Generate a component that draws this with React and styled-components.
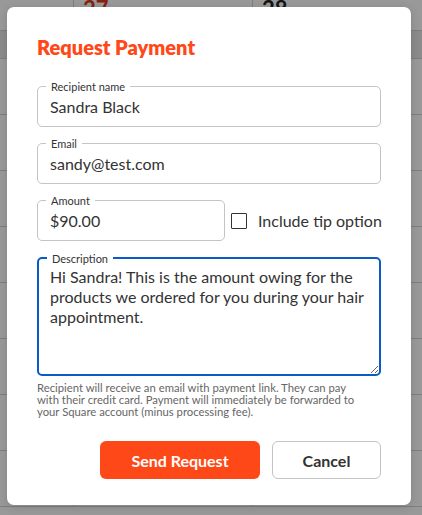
import React from "react";
import styled, { createGlobalStyle } from "styled-components";

const GlobalStyle = createGlobalStyle`
  html, body {
    margin: 0;
    padding: 0;
    background: #fff;
    font-family: Lato, "Open Sans", Arial, sans-serif;
    color: #333;
  }
  * { box-sizing: border-box; }
`;

const Page = styled.div`
  position: relative;
  width: 422px;
  height: 515px;
  overflow: hidden;
`;

const Calendar = styled.div`
  display: flex;
  flex-direction: column;
  width: 100%;
  height: 100%;
  background: #fff;
`;

const DayHeader = styled.div`
  display: grid;
  grid-template-columns: 73px 179px 179px;
  height: 31px;
  border-bottom: 1px solid #d2d2d2;
`;

const DayCell = styled.div`
  border-left: ${(p) => (p.first ? "none" : "1px solid #d2d2d2")};
  padding-left: 9px;
  font-size: 22px;
  font-weight: 700;
  line-height: 18px;
  color: ${(p) => p.color || "#222"};
`;

const AllDayRow = styled.div`
  display: grid;
  grid-template-columns: 73px 179px 179px;
  height: 28px;
  background: #e8e8e8;
  border-bottom: 1px solid #d2d2d2;
`;

const HourRow = styled.div`
  display: grid;
  grid-template-columns: 73px 179px 179px;
  height: 56px;
  flex-shrink: 0;
  border-bottom: 1px solid #d2d2d2;
`;

const GridCell = styled.div`
  border-left: ${(p) => (p.first ? "none" : "1px solid #d2d2d2")};
`;

const Overlay = styled.div`
  position: absolute;
  inset: 0;
  background: rgba(0, 0, 0, 0.4);
  padding: 7px 11px 10px 7px;
`;

const Dialog = styled.div`
  width: 404px;
  height: 498px;
  background: #fff;
  border-radius: 7px;
  box-shadow: 0 2px 10px rgba(0, 0, 0, 0.15);
  padding: 29px 30px 26px 30px;
  display: flex;
  flex-direction: column;
`;

const Title = styled.h2`
  margin: 0 0 28px 0;
  font-size: 20px;
  line-height: 22px;
  font-weight: 800;
  color: #ff4817;
`;

const Form = styled.div`
  display: flex;
  flex-direction: column;
  gap: 16px;
`;

const Row = styled.div`
  display: flex;
  align-items: center;
  gap: 6px;
`;

const Field = styled.div`
  position: relative;
  width: ${(p) => p.width || "100%"};
  height: ${(p) => p.height || "41px"};
  flex-shrink: 0;
  border: ${(p) => (p.focused ? "2px solid #0a5bc8" : "1px solid #c4c4c4")};
  border-radius: 5px;
  display: flex;
`;

const Label = styled.span`
  position: absolute;
  top: -7px;
  left: 8px;
  padding: 0 5px;
  background: #fff;
  font-size: 11px;
  line-height: 13px;
  color: #333;
`;

const Input = styled.input`
  border: none;
  outline: none;
  background: transparent;
  width: 100%;
  padding: 0 12px;
  font-family: inherit;
  font-size: 16px;
  color: #333;
`;

const TextArea = styled.textarea`
  border: none;
  outline: none;
  background: transparent;
  width: 100%;
  height: 100%;
  padding: 8px 10px 0 11px;
  font-family: inherit;
  font-size: 16px;
  line-height: 20px;
  color: #333;
  resize: vertical;
`;

const CheckLabel = styled.label`
  display: flex;
  align-items: center;
  gap: 11px;
  white-space: nowrap;
  font-size: 16px;
  color: #333;
`;

const Box = styled.span`
  width: 16px;
  height: 16px;
  flex-shrink: 0;
  border: 1.5px solid #333;
  border-radius: 1px;
  display: inline-block;
`;

const Hint = styled.p`
  margin: 6px 0 0 0;
  font-size: 11.3px;
  line-height: 12px;
  color: #666;
  white-space: nowrap;
`;

const Actions = styled.div`
  margin-top: auto;
  display: flex;
  justify-content: flex-end;
  gap: 12px;
`;

const Button = styled.button`
  height: 38px;
  width: ${(p) => p.width};
  border-radius: 6px;
  font-family: inherit;
  font-size: 16px;
  font-weight: 700;
  cursor: pointer;
  border: ${(p) => (p.primary ? "none" : "1px solid #c4c4c4")};
  background: ${(p) => (p.primary ? "#ff4817" : "#fff")};
  color: ${(p) => (p.primary ? "#fff" : "#333")};
`;

const rows = Array.from({ length: 8 });

export default function App() {
  return (
    <Page>
      <GlobalStyle />
      <Calendar>
        <DayHeader>
          <DayCell first />
          <DayCell color="#e23a1c">27</DayCell>
          <DayCell>28</DayCell>
        </DayHeader>
        <AllDayRow>
          <GridCell first />
          <GridCell />
          <GridCell />
        </AllDayRow>
        {rows.map((_, i) => (
          <HourRow key={i}>
            <GridCell first />
            <GridCell />
            <GridCell />
          </HourRow>
        ))}
      </Calendar>
      <Overlay>
        <Dialog>
          <Title>Request Payment</Title>
          <Form>
            <Field>
              <Label>Recipient name</Label>
              <Input defaultValue="Sandra Black" />
            </Field>
            <Field>
              <Label>Email</Label>
              <Input defaultValue="sandy@test.com" />
            </Field>
            <Row>
              <Field width="188px">
                <Label>Amount</Label>
                <Input defaultValue="$90.00" />
              </Field>
              <CheckLabel>
                <Box />
                Include tip option
              </CheckLabel>
            </Row>
            <div>
              <Field focused height="119px">
                <Label>Description</Label>
                <TextArea defaultValue="Hi Sandra! This is the amount owing for the products we ordered for you during your hair appointment." />
              </Field>
              <Hint>
                Recipient will receive an email with payment link. They can pay
                <br />
                with their credit card. Payment will immediately be forwarded to
                <br />
                your Square account (minus processing fee).
              </Hint>
            </div>
          </Form>
          <Actions>
            <Button primary width="160px">Send Request</Button>
            <Button width="109px">Cancel</Button>
          </Actions>
        </Dialog>
      </Overlay>
    </Page>
  );
}
